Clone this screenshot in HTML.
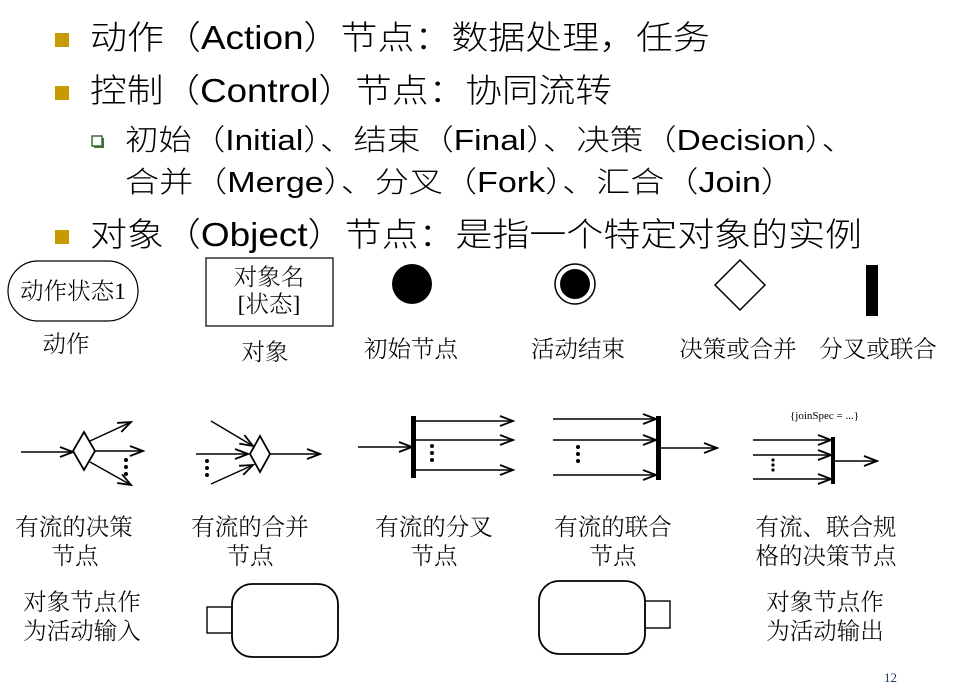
<!DOCTYPE html>
<html><head><meta charset="utf-8"><style>
html,body{margin:0;padding:0;background:#fff;width:953px;height:695px;overflow:hidden}
svg{display:block}
.m{font-family:"Liberation Sans","Noto Sans CJK SC",sans-serif;font-size:33px;fill:#000;font-weight:300}
.s{font-family:"Liberation Sans","Noto Sans CJK SC",sans-serif;font-size:29px;fill:#000;font-weight:300}
.l{font-family:"Liberation Serif","Noto Serif CJK SC",serif;font-size:23.5px;fill:#000;font-weight:300}
</style></head><body>
<svg width="953" height="695" viewBox="0 0 953 695" xmlns="http://www.w3.org/2000/svg">
<defs>
<marker id="a" markerWidth="16" markerHeight="12" refX="14" refY="6" orient="auto" markerUnits="userSpaceOnUse">
<path d="M1,1 L14,6 L1,11" fill="none" stroke="#000" stroke-width="1.8"/></marker>
</defs>
<rect x="55" y="33" width="14" height="14" fill="#c99a00"/>
<rect x="55" y="86" width="14" height="14" fill="#c99a00"/>
<rect x="55" y="230" width="14" height="14" fill="#c99a00"/>
<rect x="94" y="138" width="10" height="10" fill="#3a7a2a"/>
<rect x="92" y="136" width="10" height="10" fill="#fff" stroke="#3a6a3a" stroke-width="1.5"/>
<text class="m" x="90" y="49" textLength="620" lengthAdjust="spacingAndGlyphs">动作（Action）节点：数据处理，任务</text>
<text class="m" x="90" y="102" textLength="522" lengthAdjust="spacingAndGlyphs">控制（Control）节点：协同流转</text>
<text class="s" x="125" y="150" textLength="730" lengthAdjust="spacingAndGlyphs">初始（Initial）、结束（Final）、决策（Decision）、</text>
<text class="s" x="125" y="192" textLength="670" lengthAdjust="spacingAndGlyphs">合并（Merge）、分叉（Fork）、汇合（Join）</text>
<text class="m" x="90" y="246" textLength="772" lengthAdjust="spacingAndGlyphs">对象（Object）节点：是指一个特定对象的实例</text>

<rect x="8" y="261" width="130" height="60" rx="30" fill="none" stroke="#000" stroke-width="1.2"/>
<text class="l" x="73" y="299" text-anchor="middle" font-size="21">动作状态1</text>
<rect x="206" y="258" width="127" height="68" fill="none" stroke="#000" stroke-width="1.2"/>
<text class="l" x="269" y="285" text-anchor="middle" font-size="22">对象名</text>
<text class="l" x="269" y="312" text-anchor="middle" font-size="22">[状态]</text>
<circle cx="412" cy="284" r="20" fill="#000"/>
<circle cx="575" cy="284" r="20" fill="none" stroke="#000" stroke-width="1.5"/>
<circle cx="575" cy="284" r="15" fill="#000"/>
<path d="M740,260 L765,285 L740,310 L715,285 Z" fill="none" stroke="#000" stroke-width="1.5"/>
<rect x="866" y="265" width="12" height="51" fill="#000"/>
<text class="l" x="66" y="352" text-anchor="middle">动作</text>
<text class="l" x="265" y="360" text-anchor="middle">对象</text>
<text class="l" x="411" y="357" text-anchor="middle">初始节点</text>
<text class="l" x="578" y="357" text-anchor="middle">活动结束</text>
<text class="l" x="738" y="357" text-anchor="middle">决策或合并</text>
<text class="l" x="878" y="357" text-anchor="middle">分叉或联合</text>

<g stroke="#000" stroke-width="1.5" fill="none">
<line x1="21" y1="452" x2="73" y2="452" marker-end="url(#a)"/>
<path d="M84,432 L95,451 L84,470 L73,451 Z" stroke-width="1.8"/>
<line x1="90" y1="441" x2="131" y2="422" marker-end="url(#a)"/>
<line x1="95" y1="451" x2="143" y2="451" marker-end="url(#a)"/>
<line x1="90" y1="462" x2="131" y2="485" marker-end="url(#a)"/>
<line x1="211" y1="421" x2="253" y2="446" marker-end="url(#a)"/>
<line x1="196" y1="454" x2="248" y2="454" marker-end="url(#a)"/>
<line x1="211" y1="484" x2="253" y2="465" marker-end="url(#a)"/>
<path d="M260,436 L270,454 L260,472 L250,454 Z" stroke-width="1.8"/>
<line x1="270" y1="454" x2="320" y2="454" marker-end="url(#a)"/>
<line x1="358" y1="447" x2="412" y2="447" marker-end="url(#a)"/>
<line x1="416" y1="421" x2="513" y2="421" marker-end="url(#a)"/>
<line x1="416" y1="440" x2="513" y2="440" marker-end="url(#a)"/>
<line x1="416" y1="470" x2="513" y2="470" marker-end="url(#a)"/>
<line x1="553" y1="419" x2="656" y2="419" marker-end="url(#a)"/>
<line x1="553" y1="440" x2="656" y2="440" marker-end="url(#a)"/>
<line x1="553" y1="475" x2="656" y2="475" marker-end="url(#a)"/>
<line x1="660" y1="448" x2="717" y2="448" marker-end="url(#a)"/>
<line x1="753" y1="440" x2="831" y2="440" marker-end="url(#a)"/>
<line x1="753" y1="455" x2="831" y2="455" marker-end="url(#a)"/>
<line x1="753" y1="479" x2="831" y2="479" marker-end="url(#a)"/>
<line x1="835" y1="461" x2="877" y2="461" marker-end="url(#a)"/>
</g>
<rect x="411" y="416" width="5" height="62" fill="#000"/>
<rect x="656" y="416" width="5" height="64" fill="#000"/>
<rect x="831" y="437" width="4" height="47" fill="#000"/>
<g fill="#000">
<circle cx="126" cy="460" r="2"/><circle cx="126" cy="467" r="2"/><circle cx="126" cy="474" r="2"/>
<circle cx="207" cy="461" r="2"/><circle cx="207" cy="468" r="2"/><circle cx="207" cy="475" r="2"/>
<circle cx="432" cy="446" r="2"/><circle cx="432" cy="453" r="2"/><circle cx="432" cy="460" r="2"/>
<circle cx="578" cy="447" r="2"/><circle cx="578" cy="454" r="2"/><circle cx="578" cy="461" r="2"/>
<circle cx="773" cy="460" r="1.6"/><circle cx="773" cy="465" r="1.6"/><circle cx="773" cy="470" r="1.6"/>
</g>
<text x="790" y="419" font-family="Liberation Serif,serif" font-size="11" fill="#000">{joinSpec = ...}</text>

<text class="l" x="74" y="535" text-anchor="middle">有流的决策</text>
<text class="l" x="75" y="564" text-anchor="middle">节点</text>
<text class="l" x="250" y="535" text-anchor="middle">有流的合并</text>
<text class="l" x="250" y="564" text-anchor="middle">节点</text>
<text class="l" x="434" y="535" text-anchor="middle">有流的分叉</text>
<text class="l" x="434" y="564" text-anchor="middle">节点</text>
<text class="l" x="613" y="535" text-anchor="middle">有流的联合</text>
<text class="l" x="613" y="564" text-anchor="middle">节点</text>
<text class="l" x="826" y="535" text-anchor="middle">有流、联合规</text>
<text class="l" x="826" y="564" text-anchor="middle">格的决策节点</text>

<text class="l" x="82" y="610" text-anchor="middle">对象节点作</text>
<text class="l" x="82" y="639" text-anchor="middle">为活动输入</text>
<text class="l" x="825" y="610" text-anchor="middle">对象节点作</text>
<text class="l" x="825" y="639" text-anchor="middle">为活动输出</text>

<g fill="none" stroke="#000" stroke-width="1.8">
<rect x="207" y="607" width="25" height="26" stroke-width="1.4"/>
<rect x="232" y="584" width="106" height="73" rx="20" fill="#fff"/>
<rect x="645" y="601" width="25" height="27" stroke-width="1.4"/>
<rect x="539" y="581" width="106" height="73" rx="20" fill="#fff"/>
</g>
<text x="884" y="682" font-family="Liberation Serif,serif" font-size="13" fill="#1f3864">12</text>
</svg>
</body></html>
